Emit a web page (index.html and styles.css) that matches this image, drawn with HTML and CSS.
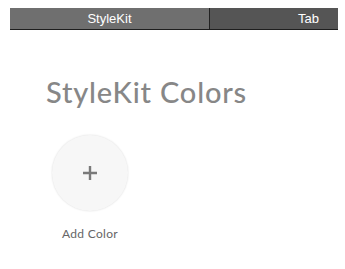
FILE: index.html
```html
<!DOCTYPE html>
<html lang="en">
<head>
  <meta charset="UTF-8">
  <title>StyleKit Colors</title>
  <link rel="stylesheet" href="styles.css">
</head>
<body>
  <div class="tabs">
    <div class="tab on">StyleKit</div>
    <div class="tab last">Tab</div>
  </div>
  <div class="page">
    <h1 class="title">StyleKit Colors</h1>
    <div class="swatch">
      <div class="circle">
        <svg width="16" height="16" viewBox="0 0 16 16">
          <path d="M8 1v14M1 8h14" stroke="#7a7a7a" stroke-width="2.4"/>
        </svg>
      </div>
      <div class="label">Add Color</div>
    </div>
  </div>
</body>
</html>
```

FILE: styles.css
```css
* {
  padding: 0;
  margin: 0;
  border: 0;
}
body {
  background: #fff;
  font-family: "Liberation Sans", Arial, sans-serif;
  width: 345px;
  height: 269px;
  overflow: hidden;
}
.tabs {
  display: flex;
  margin: 8px 7px 0 10px;
  height: 21px;
  border-bottom: 1px solid #1e1e1e;
}
.tabs .tab {
  color: #fff;
  font-size: 13px;
  line-height: 21px;
}
.tabs .on {
  width: 199px;
  text-align: center;
  background: #6f6f6f;
  border-right: 1px solid #222;
}
.tabs .last {
  flex: 1;
  text-align: right;
  padding-right: 19px;
  background: #555;
}
.page {
  padding: 45px 0 0 46px;
}
.title {
  font-family: Lato, "Open Sans", sans-serif;
  font-weight: 500;
  font-size: 29px;
  color: #878787;
  line-height: 34px;
  letter-spacing: 0.8px;
}
.swatch {
  width: 88px;
  margin-top: 26px;
  text-align: center;
}
.circle {
  width: 76px;
  height: 76px;
  margin: 0 0 0 6px;
  border-radius: 50%;
  background: #f7f7f7;
  box-shadow: 0 0 2px rgba(0, 0, 0, 0.15);
  display: flex;
  align-items: center;
  justify-content: center;
}
.label {
  margin-top: 15px;
  font-family: Lato, sans-serif;
  font-size: 12px;
  letter-spacing: 0.3px;
  color: #666;
}
```
